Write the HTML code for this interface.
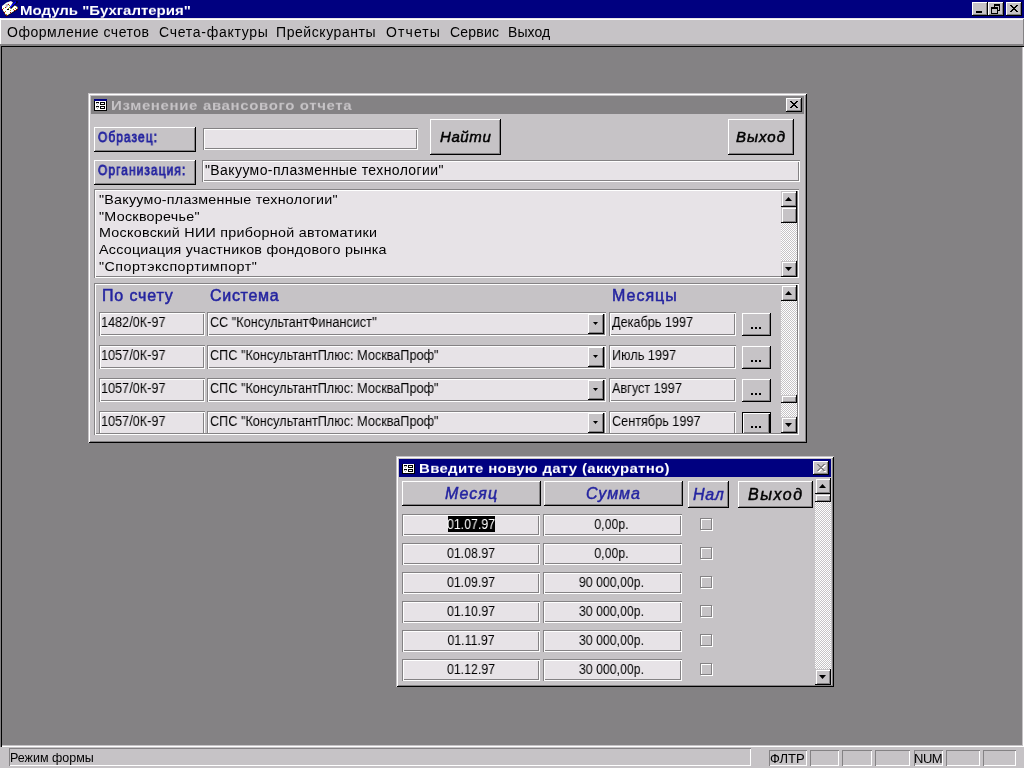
<!DOCTYPE html>
<html><head><meta charset="utf-8">
<style>
html,body{margin:0;padding:0}
body{width:1024px;height:768px;position:relative;overflow:hidden;background:#C6C3C6;font-family:"Liberation Sans",sans-serif;color:#000}
.a{position:absolute}
.t{position:absolute;white-space:pre;line-height:1;margin:0;will-change:transform}
.btn{position:absolute;background:#C6C3C6;box-shadow:inset -1px -1px #000,inset 1px 1px #fff,inset -2px -2px #848284}
.gr{position:absolute;background:#E7E3E7;box-shadow:inset 1px 1px #848284,inset -1px -1px #fff,inset 2px 2px #fff,inset -2px -2px #848284}
.grf{position:absolute;background:#C6C3C6;box-shadow:inset 1px 1px #848284,inset -1px -1px #fff,inset 2px 2px #fff,inset -2px -2px #848284}
.win{position:absolute;background:#C6C3C6;box-shadow:inset 1px 1px #C6C3C6,inset -1px -1px #000,inset 2px 2px #fff,inset -2px -2px #848284}
.dith{background-color:#C6C3C6;background-image:linear-gradient(45deg,#fff 25%,transparent 25%,transparent 75%,#fff 75%),linear-gradient(45deg,#fff 25%,transparent 25%,transparent 75%,#fff 75%);background-size:2px 2px;background-position:0 0,1px 1px}
.blue{color:#2424A0}
.sbtn{position:absolute;background:#C6C3C6;box-shadow:inset -1px -1px #000,inset 1px 1px #C6C3C6,inset 2px 2px #fff,inset -2px -2px #848284}
</style></head><body>

<!-- main title bar -->
<div class="a" style="left:0;top:0;width:1024px;height:18px;background:#000080"></div>
<div class="t" style="left:20px;top:2px;font-size:15px;font-weight:bold;color:#fff;letter-spacing:0px;transform:scaleY(0.9);transform-origin:0 12.7px">Модуль "Бухгалтерия"</div>
<div class="btn" style="left:972px;top:2px;width:16px;height:14px"></div>
<div class="btn" style="left:988px;top:2px;width:16px;height:14px"></div>
<div class="btn" style="left:1006px;top:2px;width:16px;height:14px"></div>
<svg class="a" style="left:0;top:0" width="20" height="18">
<polygon points="2,9.5 2,6 6.5,2.5 11,1 13,2.5 11,5.5 14,5 17.8,7 18,9.6 7,16.6 5.5,15.5" fill="#000"/>
<polygon points="2,9 2,6 6.5,2.5 11,1 13,2.5 11,5.5 14,5 17.5,7 17.5,9 7,15.5 5.5,14.5" fill="#fff"/>
<polygon points="5.5,4.5 9,3.5 8,6 6,8" fill="#B8B8B8"/>
<line x1="10.5" y1="8.5" x2="17.5" y2="1.5" stroke="#000" stroke-width="1.6"/>
<line x1="10" y1="7.5" x2="16" y2="2" stroke="#0000FF" stroke-width="1.3"/>
<g fill="#C00000"><rect x="8" y="4" width="1" height="1"/><rect x="5" y="7" width="1" height="1"/><rect x="2" y="9" width="1" height="1"/><rect x="4" y="12" width="1" height="1"/><rect x="6" y="15" width="1" height="1"/><rect x="10" y="12" width="1" height="1"/><rect x="14" y="10" width="1" height="1"/><rect x="16" y="9" width="1" height="1"/></g>
<g fill="#A0A000"><rect x="9" y="5" width="1" height="1"/><rect x="9" y="7" width="1" height="1"/><rect x="8" y="8" width="1" height="1"/><rect x="3" y="8" width="1" height="1"/><rect x="5" y="11" width="1" height="1"/><rect x="10" y="10" width="1" height="1"/><rect x="13" y="9" width="1" height="1"/><rect x="15" y="8" width="1" height="1"/><rect x="17" y="7" width="1" height="1"/><rect x="6" y="14" width="1" height="1"/></g>
<rect x="7" y="9" width="2" height="1" fill="#000"/>
</svg>
<div class="a" style="left:976px;top:11px;width:6px;height:2px;background:#000"></div>
<svg class="a" style="left:990px;top:3px" width="11" height="11" shape-rendering="crispEdges"><rect x="4" y="1" width="6" height="2" fill="#000"/><rect x="9" y="1" width="1" height="7" fill="#000"/><rect x="4" y="1" width="1" height="3" fill="#000"/><rect x="7" y="7" width="3" height="1" fill="#000"/><rect x="1" y="4" width="7" height="7" fill="#000"/><rect x="2" y="6" width="5" height="4" fill="#C6C3C6"/></svg>
<svg class="a" style="left:1010px;top:5px" width="8" height="7" fill="#000" shape-rendering="crispEdges"><rect x="0" y="0" width="1" height="1"/><rect x="1" y="0" width="1" height="1"/><rect x="6" y="0" width="1" height="1"/><rect x="7" y="0" width="1" height="1"/><rect x="1" y="1" width="1" height="1"/><rect x="2" y="1" width="1" height="1"/><rect x="5" y="1" width="1" height="1"/><rect x="6" y="1" width="1" height="1"/><rect x="2" y="2" width="1" height="1"/><rect x="3" y="2" width="1" height="1"/><rect x="4" y="2" width="1" height="1"/><rect x="5" y="2" width="1" height="1"/><rect x="3" y="3" width="1" height="1"/><rect x="4" y="3" width="1" height="1"/><rect x="2" y="4" width="1" height="1"/><rect x="3" y="4" width="1" height="1"/><rect x="4" y="4" width="1" height="1"/><rect x="5" y="4" width="1" height="1"/><rect x="1" y="5" width="1" height="1"/><rect x="2" y="5" width="1" height="1"/><rect x="5" y="5" width="1" height="1"/><rect x="6" y="5" width="1" height="1"/><rect x="0" y="6" width="1" height="1"/><rect x="1" y="6" width="1" height="1"/><rect x="6" y="6" width="1" height="1"/><rect x="7" y="6" width="1" height="1"/></svg>

<!-- menu bar -->
<div class="a" style="left:0;top:18px;width:1024px;height:1px;background:#E6E4E6"></div><div class="a" style="left:0;top:19px;width:1024px;height:1px;background:#fff"></div>
<div class="a" style="left:0;top:18px;width:1px;height:26px;background:#fff"></div>
<div class="t" style="left:7px;top:25px;font-size:14px;letter-spacing:0.52px">Оформление счетов</div>
<div class="t" style="left:159px;top:25px;font-size:14px;letter-spacing:0.73px">Счета-фактуры</div>
<div class="t" style="left:276px;top:25px;font-size:14px;letter-spacing:0.57px">Прейскуранты</div>
<div class="t" style="left:386px;top:25px;font-size:14px;letter-spacing:1.1px">Отчеты</div>
<div class="t" style="left:450px;top:25px;font-size:14px;letter-spacing:0.22px">Сервис</div>
<div class="t" style="left:508px;top:25px;font-size:14px;letter-spacing:0.1px">Выход</div>

<div class="a" style="left:1023px;top:19px;width:1px;height:25px;background:#848284"></div>
<!-- MDI client -->
<div class="a" style="left:0;top:44px;width:1024px;height:1px;background:#848284"></div>
<div class="a" style="left:0;top:45px;width:1024px;height:702px;background:#848284;box-shadow:inset 1px 1px #848284,inset 2px 2px #000,inset -1px -1px #fff,inset -2px -2px #C6C3C6"></div>

<!-- status bar -->
<div class="a" style="left:9px;top:748px;width:742px;height:18px;box-shadow:inset 1px 1px #848284,inset -1px -1px #fff"></div>
<div class="t" style="left:10px;top:752px;font-size:12.5px">Режим формы</div>
<div class="a" style="left:769px;top:750px;width:38px;height:16px;box-shadow:inset 1px 1px #848284,inset -1px -1px #fff"></div>
<div class="t" style="left:770px;top:752px;font-size:13px">ФЛТР</div>
<div class="a" style="left:810px;top:750px;width:29px;height:16px;box-shadow:inset 1px 1px #848284,inset -1px -1px #fff"></div>
<div class="a" style="left:842px;top:750px;width:30px;height:16px;box-shadow:inset 1px 1px #848284,inset -1px -1px #fff"></div>
<div class="a" style="left:875px;top:750px;width:35px;height:16px;box-shadow:inset 1px 1px #848284,inset -1px -1px #fff"></div>
<div class="a" style="left:914px;top:750px;width:29px;height:16px;box-shadow:inset 1px 1px #848284,inset -1px -1px #fff"></div>
<div class="t" style="left:914px;top:752px;font-size:13px;letter-spacing:-0.5px">NUM</div>
<div class="a" style="left:946px;top:750px;width:34px;height:16px;box-shadow:inset 1px 1px #848284,inset -1px -1px #fff"></div>
<div class="a" style="left:983px;top:750px;width:33px;height:16px;box-shadow:inset 1px 1px #848284,inset -1px -1px #fff"></div>

<!-- DIALOG 1 -->
<div class="win" style="left:88px;top:93px;width:719px;height:350px"></div>
<div class="a" style="left:91px;top:96px;width:713px;height:18px;background:#848284"></div>
<div class="t" style="left:111px;top:97px;font-size:15px;font-weight:bold;color:#C6C3C6;letter-spacing:0.64px;transform:scaleY(0.9);transform-origin:0 12.7px">Изменение авансового отчета</div>
<div class="btn" style="left:786px;top:98px;width:16px;height:14px"></div>
<svg class="a" style="left:790px;top:101px" width="8" height="7" fill="#000" shape-rendering="crispEdges"><rect x="0" y="0" width="1" height="1"/><rect x="1" y="0" width="1" height="1"/><rect x="6" y="0" width="1" height="1"/><rect x="7" y="0" width="1" height="1"/><rect x="1" y="1" width="1" height="1"/><rect x="2" y="1" width="1" height="1"/><rect x="5" y="1" width="1" height="1"/><rect x="6" y="1" width="1" height="1"/><rect x="2" y="2" width="1" height="1"/><rect x="3" y="2" width="1" height="1"/><rect x="4" y="2" width="1" height="1"/><rect x="5" y="2" width="1" height="1"/><rect x="3" y="3" width="1" height="1"/><rect x="4" y="3" width="1" height="1"/><rect x="2" y="4" width="1" height="1"/><rect x="3" y="4" width="1" height="1"/><rect x="4" y="4" width="1" height="1"/><rect x="5" y="4" width="1" height="1"/><rect x="1" y="5" width="1" height="1"/><rect x="2" y="5" width="1" height="1"/><rect x="5" y="5" width="1" height="1"/><rect x="6" y="5" width="1" height="1"/><rect x="0" y="6" width="1" height="1"/><rect x="1" y="6" width="1" height="1"/><rect x="6" y="6" width="1" height="1"/><rect x="7" y="6" width="1" height="1"/></svg>
<svg class="a" style="left:94px;top:99px" width="13" height="12" shape-rendering="crispEdges"><rect x="0" y="0" width="13" height="2" fill="#000080"/><rect x="0" y="2" width="13" height="10" fill="#000"/><rect x="1" y="2" width="11" height="9" fill="#fff"/><rect x="2" y="4" width="1" height="1" fill="#B0B0B0"/><rect x="4" y="4" width="1" height="1" fill="#B0B0B0"/><rect x="3" y="5" width="1" height="1" fill="#B0B0B0"/><rect x="2" y="8" width="1" height="1" fill="#B0B0B0"/><rect x="4" y="8" width="1" height="1" fill="#B0B0B0"/><rect x="3" y="9" width="1" height="1" fill="#B0B0B0"/><rect x="2" y="3" width="3" height="1" fill="#000"/><rect x="2" y="7" width="3" height="1" fill="#000"/><rect x="6" y="3" width="5" height="3" fill="#000"/><rect x="7" y="4" width="3" height="1" fill="#fff"/><rect x="6" y="7" width="5" height="3" fill="#000"/><rect x="7" y="8" width="3" height="1" fill="#fff"/></svg>

<div class="btn" style="left:94px;top:127px;width:102px;height:25px"></div>
<div class="t blue" style="left:98px;top:130px;font-size:14px;letter-spacing:1.3px;-webkit-text-stroke:0.8px #2424A0;transform:scaleX(0.85);transform-origin:0 0">Образец:</div>
<div class="btn" style="left:94px;top:160px;width:102px;height:25px"></div>
<div class="t blue" style="left:98px;top:163px;font-size:14px;letter-spacing:1.3px;-webkit-text-stroke:0.8px #2424A0;transform:scaleX(0.85);transform-origin:0 0">Организация:</div>
<div class="gr" style="left:203px;top:128px;width:215px;height:22px"></div>
<div class="btn" style="left:430px;top:119px;width:71px;height:36px"></div>
<div class="t" style="left:440px;top:129px;font-size:15px;font-style:italic;letter-spacing:0.6px;-webkit-text-stroke:0.5px #000">Найти</div>
<div class="btn" style="left:728px;top:119px;width:66px;height:36px"></div>
<div class="t" style="left:736px;top:129px;font-size:15px;font-style:italic;letter-spacing:1px;-webkit-text-stroke:0.5px #000">Выход</div>
<div class="gr" style="left:202px;top:160px;width:598px;height:22px"></div>
<div class="t" style="left:205px;top:163px;font-size:14px;letter-spacing:0.4px">"Вакуумо-плазменные технологии"</div>

<!-- listbox -->
<div class="gr" style="left:94px;top:189px;width:705px;height:89px"></div>
<div class="t" style="left:99px;top:191.6px;font-size:13px;line-height:16.62px;transform:scaleX(1.1);transform-origin:0 0"><span style="letter-spacing:0.22px">"Вакуумо-плазменные технологии"</span>
<span style="letter-spacing:0.25px">"Москворечье"</span>
<span style="letter-spacing:0.25px">Московский НИИ приборной автоматики</span>
<span style="letter-spacing:0.22px">Ассоциация участников фондового рынка</span>
<span style="letter-spacing:0.43px">"Спортэкспортимпорт"</span></div>

<!-- subform -->
<div class="grf" style="left:94px;top:283px;width:705px;height:152px"></div>
<div class="a" style="left:96px;top:285px;width:701px;height:148px;overflow:hidden">
<div class="t blue" style="left:6px;top:3px;font-size:16px;letter-spacing:0.85px;-webkit-text-stroke:0.5px #2424A0">По счету</div>
<div class="t blue" style="left:114px;top:3px;font-size:16px;letter-spacing:0.7px;-webkit-text-stroke:0.5px #2424A0">Система</div>
<div class="t blue" style="left:516px;top:3px;font-size:16px;letter-spacing:1px;-webkit-text-stroke:0.5px #2424A0">Месяцы</div>
<div class="gr" style="left:3px;top:27px;width:106px;height:24px"></div>
<div class="t" style="left:5px;top:30px;font-size:14px;transform:scaleX(0.905);transform-origin:0 0">1482/0К-97</div>
<div class="gr" style="left:111px;top:27px;width:399px;height:24px"></div>
<div class="t" style="left:114px;top:30px;font-size:14px;transform:scaleX(0.905);transform-origin:0 0">СС "КонсультантФинансист"</div>
<div class="btn" style="left:492px;top:29px;width:16px;height:20px"></div>
<svg class="a" style="left:497px;top:37px" width="5" height="3"><path d="M0 0h5l-2.5 3z" fill="#000"/></svg>
<div class="gr" style="left:513px;top:27px;width:127px;height:24px"></div>
<div class="t" style="left:516px;top:30px;font-size:14px;transform:scaleX(0.905);transform-origin:0 0">Декабрь 1997</div>
<div class="btn" style="left:646px;top:28px;width:29px;height:23px"></div>
<div class="a" style="left:655px;top:42px;width:2px;height:2px;background:#000;box-shadow:4px 0 #000,8px 0 #000"></div>
<div class="gr" style="left:3px;top:60px;width:106px;height:24px"></div>
<div class="t" style="left:5px;top:63px;font-size:14px;transform:scaleX(0.905);transform-origin:0 0">1057/0К-97</div>
<div class="gr" style="left:111px;top:60px;width:399px;height:24px"></div>
<div class="t" style="left:114px;top:63px;font-size:14px;transform:scaleX(0.905);transform-origin:0 0">СПС "КонсультантПлюс: МоскваПроф"</div>
<div class="btn" style="left:492px;top:62px;width:16px;height:20px"></div>
<svg class="a" style="left:497px;top:70px" width="5" height="3"><path d="M0 0h5l-2.5 3z" fill="#000"/></svg>
<div class="gr" style="left:513px;top:60px;width:127px;height:24px"></div>
<div class="t" style="left:516px;top:63px;font-size:14px;transform:scaleX(0.905);transform-origin:0 0">Июль 1997</div>
<div class="btn" style="left:646px;top:61px;width:29px;height:23px"></div>
<div class="a" style="left:655px;top:75px;width:2px;height:2px;background:#000;box-shadow:4px 0 #000,8px 0 #000"></div>
<div class="gr" style="left:3px;top:93px;width:106px;height:24px"></div>
<div class="t" style="left:5px;top:96px;font-size:14px;transform:scaleX(0.905);transform-origin:0 0">1057/0К-97</div>
<div class="gr" style="left:111px;top:93px;width:399px;height:24px"></div>
<div class="t" style="left:114px;top:96px;font-size:14px;transform:scaleX(0.905);transform-origin:0 0">СПС "КонсультантПлюс: МоскваПроф"</div>
<div class="btn" style="left:492px;top:95px;width:16px;height:20px"></div>
<svg class="a" style="left:497px;top:103px" width="5" height="3"><path d="M0 0h5l-2.5 3z" fill="#000"/></svg>
<div class="gr" style="left:513px;top:93px;width:127px;height:24px"></div>
<div class="t" style="left:516px;top:96px;font-size:14px;transform:scaleX(0.905);transform-origin:0 0">Август 1997</div>
<div class="btn" style="left:646px;top:94px;width:29px;height:23px"></div>
<div class="a" style="left:655px;top:108px;width:2px;height:2px;background:#000;box-shadow:4px 0 #000,8px 0 #000"></div>
<div class="gr" style="left:3px;top:126px;width:106px;height:24px"></div>
<div class="t" style="left:5px;top:129px;font-size:14px;transform:scaleX(0.905);transform-origin:0 0">1057/0К-97</div>
<div class="gr" style="left:111px;top:126px;width:399px;height:24px"></div>
<div class="t" style="left:114px;top:129px;font-size:14px;transform:scaleX(0.905);transform-origin:0 0">СПС "КонсультантПлюс: МоскваПроф"</div>
<div class="btn" style="left:492px;top:128px;width:16px;height:20px"></div>
<svg class="a" style="left:497px;top:136px" width="5" height="3"><path d="M0 0h5l-2.5 3z" fill="#000"/></svg>
<div class="gr" style="left:513px;top:126px;width:127px;height:24px"></div>
<div class="t" style="left:516px;top:129px;font-size:14px;transform:scaleX(0.905);transform-origin:0 0">Сентябрь 1997</div>
<div class="btn" style="left:646px;top:127px;width:29px;height:23px;box-shadow:inset 1px 1px #000,inset -1px -1px #000,inset 2px 2px #fff,inset -2px -2px #000,inset -3px -3px #848284"></div>
<div class="a" style="left:655px;top:141px;width:2px;height:2px;background:#000;box-shadow:4px 0 #000,8px 0 #000"></div>
</div>
<div class="a dith" style="left:781px;top:285px;width:16px;height:148px"></div>
<div class="sbtn" style="left:781px;top:285px;width:16px;height:16px"></div>
<svg class="a" style="left:785px;top:291px" width="7" height="4"><path d="M3.5 0L7 4H0z" fill="#000"/></svg>
<div class="sbtn" style="left:781px;top:395px;width:16px;height:8px"></div>
<div class="sbtn" style="left:781px;top:417px;width:16px;height:16px"></div>
<svg class="a" style="left:785px;top:423px" width="7" height="4"><path d="M0 0h7L3.5 4z" fill="#000"/></svg>
<div class="a dith" style="left:781px;top:191px;width:16px;height:86px"></div>
<div class="sbtn" style="left:781px;top:191px;width:16px;height:16px"></div>
<svg class="a" style="left:785px;top:197px" width="7" height="4"><path d="M3.5 0L7 4H0z" fill="#000"/></svg>
<div class="sbtn" style="left:781px;top:207px;width:16px;height:16px"></div>
<div class="sbtn" style="left:781px;top:261px;width:16px;height:16px"></div>
<svg class="a" style="left:785px;top:267px" width="7" height="4"><path d="M0 0h7L3.5 4z" fill="#000"/></svg>
<!-- DIALOG 2 -->
<div class="win" style="left:396px;top:456px;width:438px;height:231px"></div>
<div class="a" style="left:399px;top:459px;width:432px;height:18px;background:#000080"></div>
<div class="t" style="left:419px;top:460px;font-size:15px;font-weight:bold;color:#fff;letter-spacing:0.3px;transform:scaleY(0.9);transform-origin:0 12.7px">Введите новую дату (аккуратно)</div>
<div class="btn" style="left:813px;top:461px;width:16px;height:14px"></div>
<svg class="a" style="left:818px;top:465px" width="8" height="7" fill="#fff" shape-rendering="crispEdges"><rect x="0" y="0" width="1" height="1"/><rect x="1" y="0" width="1" height="1"/><rect x="6" y="0" width="1" height="1"/><rect x="7" y="0" width="1" height="1"/><rect x="1" y="1" width="1" height="1"/><rect x="2" y="1" width="1" height="1"/><rect x="5" y="1" width="1" height="1"/><rect x="6" y="1" width="1" height="1"/><rect x="2" y="2" width="1" height="1"/><rect x="3" y="2" width="1" height="1"/><rect x="4" y="2" width="1" height="1"/><rect x="5" y="2" width="1" height="1"/><rect x="3" y="3" width="1" height="1"/><rect x="4" y="3" width="1" height="1"/><rect x="2" y="4" width="1" height="1"/><rect x="3" y="4" width="1" height="1"/><rect x="4" y="4" width="1" height="1"/><rect x="5" y="4" width="1" height="1"/><rect x="1" y="5" width="1" height="1"/><rect x="2" y="5" width="1" height="1"/><rect x="5" y="5" width="1" height="1"/><rect x="6" y="5" width="1" height="1"/><rect x="0" y="6" width="1" height="1"/><rect x="1" y="6" width="1" height="1"/><rect x="6" y="6" width="1" height="1"/><rect x="7" y="6" width="1" height="1"/></svg><svg class="a" style="left:817px;top:464px" width="8" height="7" fill="#848284" shape-rendering="crispEdges"><rect x="0" y="0" width="1" height="1"/><rect x="1" y="0" width="1" height="1"/><rect x="6" y="0" width="1" height="1"/><rect x="7" y="0" width="1" height="1"/><rect x="1" y="1" width="1" height="1"/><rect x="2" y="1" width="1" height="1"/><rect x="5" y="1" width="1" height="1"/><rect x="6" y="1" width="1" height="1"/><rect x="2" y="2" width="1" height="1"/><rect x="3" y="2" width="1" height="1"/><rect x="4" y="2" width="1" height="1"/><rect x="5" y="2" width="1" height="1"/><rect x="3" y="3" width="1" height="1"/><rect x="4" y="3" width="1" height="1"/><rect x="2" y="4" width="1" height="1"/><rect x="3" y="4" width="1" height="1"/><rect x="4" y="4" width="1" height="1"/><rect x="5" y="4" width="1" height="1"/><rect x="1" y="5" width="1" height="1"/><rect x="2" y="5" width="1" height="1"/><rect x="5" y="5" width="1" height="1"/><rect x="6" y="5" width="1" height="1"/><rect x="0" y="6" width="1" height="1"/><rect x="1" y="6" width="1" height="1"/><rect x="6" y="6" width="1" height="1"/><rect x="7" y="6" width="1" height="1"/></svg>
<svg class="a" style="left:402px;top:462px" width="13" height="12" shape-rendering="crispEdges"><rect x="0" y="0" width="13" height="2" fill="#000080"/><rect x="0" y="2" width="13" height="10" fill="#000"/><rect x="1" y="2" width="11" height="9" fill="#fff"/><rect x="2" y="4" width="1" height="1" fill="#B0B0B0"/><rect x="4" y="4" width="1" height="1" fill="#B0B0B0"/><rect x="3" y="5" width="1" height="1" fill="#B0B0B0"/><rect x="2" y="8" width="1" height="1" fill="#B0B0B0"/><rect x="4" y="8" width="1" height="1" fill="#B0B0B0"/><rect x="3" y="9" width="1" height="1" fill="#B0B0B0"/><rect x="2" y="3" width="3" height="1" fill="#000"/><rect x="2" y="7" width="3" height="1" fill="#000"/><rect x="6" y="3" width="5" height="3" fill="#000"/><rect x="7" y="4" width="3" height="1" fill="#fff"/><rect x="6" y="7" width="5" height="3" fill="#000"/><rect x="7" y="8" width="3" height="1" fill="#fff"/></svg>
<div class="btn" style="left:402px;top:481px;width:139px;height:25px"></div>
<div class="t blue" style="left:445px;top:486px;font-size:16px;font-style:italic;letter-spacing:1.1px;-webkit-text-stroke:0.45px #2424A0">Месяц</div>
<div class="btn" style="left:544px;top:481px;width:139px;height:25px"></div>
<div class="t blue" style="left:586px;top:486px;font-size:16px;font-style:italic;letter-spacing:0.9px;-webkit-text-stroke:0.45px #2424A0">Сумма</div>
<div class="btn" style="left:688px;top:481px;width:41px;height:27px"></div>
<div class="t blue" style="left:693px;top:487px;font-size:16px;font-style:italic;letter-spacing:0.8px;-webkit-text-stroke:0.45px #2424A0">Нал</div>
<div class="btn" style="left:738px;top:481px;width:75px;height:27px"></div>
<div class="t" style="left:748px;top:487px;font-size:16px;font-style:italic;letter-spacing:1.5px;-webkit-text-stroke:0.45px #000">Выход</div>
<div class="gr" style="left:402px;top:514px;width:138px;height:22px"></div>
<div class="a" style="left:448px;top:516px;width:47px;height:16px;background:#000"></div>
<div class="t" style="left:402px;top:517px;width:138px;text-align:center;font-size:14px;transform:scaleX(0.88);transform-origin:50% 0;color:#fff">01.07.97</div>
<div class="gr" style="left:543px;top:514px;width:139px;height:22px"></div>
<div class="t" style="left:542px;top:517px;width:139px;text-align:center;font-size:14px;transform:scaleX(0.88);transform-origin:50% 0">0,00р.</div>
<div class="a" style="left:701px;top:519px;width:10px;height:10px;border:1px solid #fff"></div><div class="a" style="left:700px;top:518px;width:10px;height:10px;border:1px solid #848284"></div>
<div class="gr" style="left:402px;top:543px;width:138px;height:22px"></div>
<div class="t" style="left:402px;top:546px;width:138px;text-align:center;font-size:14px;transform:scaleX(0.88);transform-origin:50% 0">01.08.97</div>
<div class="gr" style="left:543px;top:543px;width:139px;height:22px"></div>
<div class="t" style="left:542px;top:546px;width:139px;text-align:center;font-size:14px;transform:scaleX(0.88);transform-origin:50% 0">0,00р.</div>
<div class="a" style="left:701px;top:548px;width:10px;height:10px;border:1px solid #fff"></div><div class="a" style="left:700px;top:547px;width:10px;height:10px;border:1px solid #848284"></div>
<div class="gr" style="left:402px;top:572px;width:138px;height:22px"></div>
<div class="t" style="left:402px;top:575px;width:138px;text-align:center;font-size:14px;transform:scaleX(0.88);transform-origin:50% 0">01.09.97</div>
<div class="gr" style="left:543px;top:572px;width:139px;height:22px"></div>
<div class="t" style="left:542px;top:575px;width:139px;text-align:center;font-size:14px;transform:scaleX(0.88);transform-origin:50% 0">90 000,00р.</div>
<div class="a" style="left:701px;top:577px;width:10px;height:10px;border:1px solid #fff"></div><div class="a" style="left:700px;top:576px;width:10px;height:10px;border:1px solid #848284"></div>
<div class="gr" style="left:402px;top:601px;width:138px;height:22px"></div>
<div class="t" style="left:402px;top:604px;width:138px;text-align:center;font-size:14px;transform:scaleX(0.88);transform-origin:50% 0">01.10.97</div>
<div class="gr" style="left:543px;top:601px;width:139px;height:22px"></div>
<div class="t" style="left:542px;top:604px;width:139px;text-align:center;font-size:14px;transform:scaleX(0.88);transform-origin:50% 0">30 000,00р.</div>
<div class="a" style="left:701px;top:606px;width:10px;height:10px;border:1px solid #fff"></div><div class="a" style="left:700px;top:605px;width:10px;height:10px;border:1px solid #848284"></div>
<div class="gr" style="left:402px;top:630px;width:138px;height:22px"></div>
<div class="t" style="left:402px;top:633px;width:138px;text-align:center;font-size:14px;transform:scaleX(0.88);transform-origin:50% 0">01.11.97</div>
<div class="gr" style="left:543px;top:630px;width:139px;height:22px"></div>
<div class="t" style="left:542px;top:633px;width:139px;text-align:center;font-size:14px;transform:scaleX(0.88);transform-origin:50% 0">30 000,00р.</div>
<div class="a" style="left:701px;top:635px;width:10px;height:10px;border:1px solid #fff"></div><div class="a" style="left:700px;top:634px;width:10px;height:10px;border:1px solid #848284"></div>
<div class="gr" style="left:402px;top:659px;width:138px;height:22px"></div>
<div class="t" style="left:402px;top:662px;width:138px;text-align:center;font-size:14px;transform:scaleX(0.88);transform-origin:50% 0">01.12.97</div>
<div class="gr" style="left:543px;top:659px;width:139px;height:22px"></div>
<div class="t" style="left:542px;top:662px;width:139px;text-align:center;font-size:14px;transform:scaleX(0.88);transform-origin:50% 0">30 000,00р.</div>
<div class="a" style="left:701px;top:664px;width:10px;height:10px;border:1px solid #fff"></div><div class="a" style="left:700px;top:663px;width:10px;height:10px;border:1px solid #848284"></div>
<div class="a dith" style="left:815px;top:478px;width:16px;height:207px"></div>
<div class="sbtn" style="left:815px;top:478px;width:16px;height:16px"></div>
<svg class="a" style="left:819px;top:484px" width="7" height="4"><path d="M3.5 0L7 4H0z" fill="#000"/></svg>
<div class="sbtn" style="left:815px;top:494px;width:16px;height:8px"></div>
<div class="sbtn" style="left:815px;top:669px;width:16px;height:16px"></div>
<svg class="a" style="left:819px;top:675px" width="7" height="4"><path d="M0 0h7L3.5 4z" fill="#000"/></svg>
</body></html>
